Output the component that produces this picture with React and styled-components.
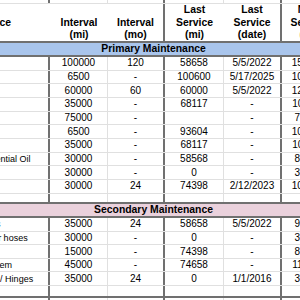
import React from "react";
import styled, { createGlobalStyle } from "styled-components";

const LIGHT = "#e0e0e0";
const DARK = "#707070";
const COLS = "78.9px 58px 57px 59px 58px 54px 60px";
const DARK_RIGHT = [true, false, true, false, true, false, false];
const HEAD_RIGHT = [false, false, true, false, true, false, false];

const GlobalStyle = createGlobalStyle`
  html, body { margin: 0; padding: 0; background: #ffffff; }
  body { font-family: "Liberation Sans", Arial, sans-serif; color: #000; }
`;

const Viewport = styled.div`
  width: 300px;
  height: 300px;
  overflow: hidden;
  background: #fff;
`;

const Sheet = styled.div`
  width: max-content;
  margin-left: -28.9px;
  display: flex;
  flex-direction: column;
`;

const Row = styled.div`
  display: grid;
  grid-template-columns: ${COLS};
  height: ${(p) => p.$h}px;
  box-sizing: border-box;
  border-bottom: ${(p) => (p.$dark ? `2px solid ${DARK}` : `1px solid ${LIGHT}`)};
`;

const Cell = styled.div`
  box-sizing: border-box;
  border-right: ${(p) => (p.$darkRight ? `2px solid ${DARK}` : `1px solid ${LIGHT}`)};
  display: flex;
  align-items: center;
  justify-content: ${(p) => (p.$left ? "flex-start" : "center")};
  padding-left: ${(p) => (p.$left ? "3px" : "0")};
  font-size: ${(p) => (p.$left ? "9px" : "10px")};
  line-height: 12px;
  white-space: nowrap;
  overflow: ${(p) => (p.$left ? "visible" : "hidden")};
`;

const HeadCell = styled.div`
  box-sizing: border-box;
  border-right: ${(p) => (p.$darkRight ? `2px solid ${DARK}` : "none")};
  display: flex;
  flex-direction: column;
  justify-content: ${(p) => (p.$middle ? "center" : "flex-end")};
  align-items: ${(p) => (p.$left ? "flex-start" : "center")};
  padding-left: ${(p) => (p.$left ? "3px" : "0")};
  font-size: 10.4px;
  font-weight: bold;
  line-height: 12.6px;
  text-align: center;
  white-space: nowrap;
`;

const Band = styled.div`
  grid-column: 1 / 7;
  background: ${(p) => p.$bg};
  display: flex;
  align-items: center;
  justify-content: center;
  font-size: 10.4px;
  font-weight: bold;
  line-height: 12px;
`;

const BandTail = styled.div`
  background: ${(p) => p.$bg};
`;

const headers = [
  ["Service"],
  ["Interval", "(mi)"],
  ["Interval", "(mo)"],
  ["Last", "Service", "(mi)"],
  ["Last", "Service", "(date)"],
  ["Next", "Service", "(mi)"],
  ["Next", "Service", "(date)"],
];

const primary = [
  ["Plugs", "100000", "120", "58658", "5/5/2022", "158658"],
  ["Oil", "6500", "-", "100600", "5/17/2025", "107100"],
  ["Belts", "60000", "60", "60000", "5/5/2022", "120000"],
  ["Pads", "35000", "-", "68117", "-", "103117"],
  ["Pump", "75000", "-", "", "-", "75000"],
  ["Tires", "6500", "-", "93604", "-", "100104"],
  ["Fluid", "35000", "-", "68117", "-", "103117"],
  ["Differential Oil", "30000", "-", "58568", "-", "88568"],
  ["Filter", "30000", "-", "0", "-", "30000"],
  ["Cabin", "30000", "24", "74398", "2/12/2023", "104398"],
];

const secondary = [
  ["Rotors", "35000", "24", "58658", "5/5/2022", "93658"],
  ["Heater hoses", "30000", "-", "0", "-", "30000"],
  ["Lights", "15000", "-", "74398", "-", "89398"],
  ["Misc item", "45000", "-", "74658", "-", "119658"],
  ["Locks / Hinges", "35000", "24", "0", "1/1/2016", "35000"],
];

const ROW_H = 13.67;

function DataRow({ cells, h = ROW_H, dark }) {
  const full = [...cells];
  while (full.length < 7) full.push("");
  return (
    <Row $h={h} $dark={dark}>
      {full.slice(0, 7).map((c, i) => (
        <Cell key={i} $left={i === 0} $darkRight={DARK_RIGHT[i]}>
          {c}
        </Cell>
      ))}
    </Row>
  );
}

function BandRow({ label, bg }) {
  return (
    <Row $h={14} $dark>
      <Band $bg={bg}>{label}</Band>
      <BandTail $bg={bg} />
    </Row>
  );
}

export default function App() {
  return (
    <Viewport>
      <GlobalStyle />
      <Sheet>
        <DataRow cells={[]} h={4} />
        <Row $h={39} $dark>
          {headers.map((lines, i) => (
            <HeadCell key={i} $left={i === 0} $middle={i === 0} $darkRight={HEAD_RIGHT[i]}>
              {lines.map((l) => (
                <span key={l}>{l}</span>
              ))}
            </HeadCell>
          ))}
        </Row>
        <BandRow label="Primary Maintenance" bg="#a9c5ec" />
        {primary.map((r, i) => (
          <DataRow key={i} cells={r} />
        ))}
        <DataRow cells={[]} h={10.3} dark />
        <BandRow label="Secondary Maintenance" bg="#ead1dc" />
        {secondary.map((r, i) => (
          <DataRow key={i} cells={r} />
        ))}
        <DataRow cells={[]} h={11.65} dark />
        <DataRow cells={[]} h={14} />
      </Sheet>
    </Viewport>
  );
}
